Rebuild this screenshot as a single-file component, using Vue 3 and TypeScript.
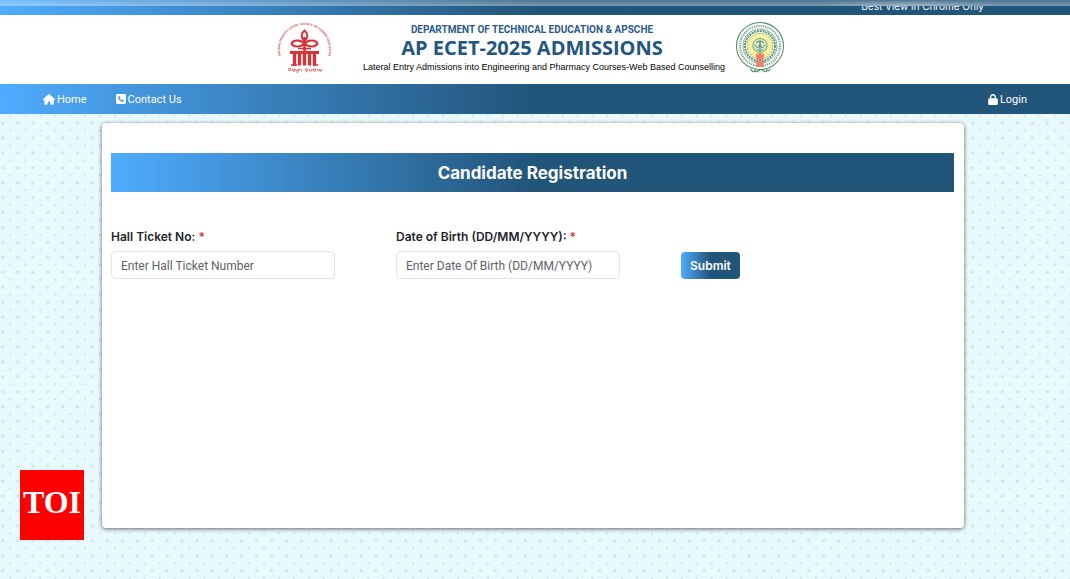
<script setup lang="ts">
import { ref } from 'vue'

const hallTicket = ref('')
const birthDate = ref('')

const archPillars: number[] = [16, 21, 26, 31, 36]
</script>

<template>
  <div class="page">
    <svg class="dots" aria-hidden="true">
      <defs>
        <pattern id="dot-grid" x="-4.5" y="115.6" width="14.92" height="14.92" patternUnits="userSpaceOnUse">
          <circle cx="7.46" cy="7.46" r="1.7" fill="#cbe9ec" />
          <circle cx="0" cy="0" r="1.2" fill="#cbe9ec" />
          <circle cx="14.92" cy="0" r="1.2" fill="#cbe9ec" />
          <circle cx="0" cy="14.92" r="1.2" fill="#cbe9ec" />
          <circle cx="14.92" cy="14.92" r="1.2" fill="#cbe9ec" />
        </pattern>
      </defs>
      <rect width="100%" height="100%" fill="url(#dot-grid)" />
    </svg>

    <div class="topbar">
      <span>Best View in Chrome Only</span>
      <div class="haze"></div>
    </div>

    <header class="masthead">
      <svg class="logo logo-left" viewBox="0 0 56 54" role="img" aria-label="Andhra Pradesh State Council of Higher Education">
        <defs>
          <path id="council-arc" d="M9.500 45 A24.500 24.500 0 1 1 45.500 45" />
        </defs>
        <text class="ring-text" fill="#d23f42"><textPath href="#council-arc" startOffset="50%" text-anchor="middle">ANDHRA PRADESH STATE COUNCIL OF HIGHER EDUCATION</textPath></text>
        <g fill="none" stroke="#dc3136" stroke-width="2">
          <path d="M27.500 9.500 C23.500 13 24 17 27.500 20 C31 17 31.500 13 27.500 9.500Z" />
          <path d="M27.500 22.500 C23 18 16 19 14.500 22.500 C16 26 23 27 27.500 22.500Z" />
          <path d="M27.500 22.500 C32 18 39 19 40.500 22.500 C39 26 32 27 27.500 22.500Z" />
          <path d="M27.500 16 V30" stroke-width="2.600" />
          <path d="M21 27.500 H34" stroke-width="1.500" />
        </g>
        <path d="M13 30 H42 V33 H13Z" fill="#dc3136" />
        <path v-for="x in archPillars" :key="x" :d="`M${x + 1.5} 32 V44.500`" stroke="#dc3136" stroke-width="3.300" />
        <path d="M14 44 H20 M36 44 H41" stroke="#dc3136" stroke-width="1.500" />
        <g fill="none" stroke="#d9585a" stroke-width="1">
          <path d="M11 48 q2 -2 3 0 q-1 3 -3 1 M15 50 q0 -3 2 -2 q2 2 -1 3 M18 48 q2 4 3 0 q1 3 -1 4 M22 49 q2 -2 3 1" />
          <path d="M28 50 q0 -3 2 -2 q2 2 -1 3 M32 48 q2 5 3 0 M36 50 q0 -3 2 -2 q2 2 -1 3 M40 48 q2 4 3 0 M43 50 q1 1 2 -2" />
        </g>
      </svg>

      <div class="titles">
        <p class="dept">DEPARTMENT OF TECHNICAL EDUCATION &amp; APSCHE</p>
        <h1>AP ECET-2025 ADMISSIONS</h1>
        <p class="tagline">Lateral Entry Admissions into Engineering and Pharmacy Courses-Web Based Counselling</p>
      </div>

      <svg class="logo logo-right" viewBox="0 0 50 54" role="img" aria-label="Government of Andhra Pradesh">
        <circle cx="25" cy="25" r="23.500" fill="#fff" stroke="#4f8e68" stroke-width="1.100" />
        <circle cx="25" cy="25" r="20" fill="none" stroke="#7dab8d" stroke-width="2.200" stroke-dasharray="1.300 1" />
        <circle cx="25" cy="25" r="17" fill="#fff" stroke="#5c9674" stroke-width=".8" />
        <circle cx="25" cy="25" r="15" fill="none" stroke="#5c9674" stroke-width="2" stroke-dasharray="2 .8" />
        <circle cx="25" cy="25" r="13" fill="#f8efa0" stroke="#86ab82" stroke-width=".6" />
        <circle cx="25" cy="24.500" r="7" fill="#dfebd1" stroke="#5c9674" stroke-width=".9" />
        <g fill="none" stroke="#3f815a" stroke-width="1">
          <path d="M21 22 Q25 18 29 22 M20 24 Q23 29 25 24 Q27 29 30 24 M22 28 Q25 32 28 28 M25 20 V29" />
        </g>
        <path d="M21 36 Q20 32 23 33 Q25 31 27 33 Q30 32 29 36 L28 39 H22Z M20 40 H30 V42 H28.500 L29 46 H21 L21.500 42 H20Z" fill="#ed806d" />
        <g fill="none" stroke="#4f8e68" stroke-width="1.100">
          <path d="M15 49 q2 -1 2 1 q2 2 3 -1 q1 3 3 1 q1 -2 2 0 M27 50 q1 -2 2 0 q2 2 3 -1 q2 2 3 -1" />
        </g>
      </svg>
    </header>

    <nav class="navbar" aria-label="Main">
      <a href="#home">
        <svg class="icon-home" viewBox="0 0 576 512" aria-hidden="true"><path fill="currentColor" d="M575.8 255.5c0 18-15 32.1-32 32.1h-32l.7 160.2c0 2.700-.2 5.400-.5 8.100V472c0 22.100-17.900 40-40 40H456c-1.100 0-2.200 0-3.300-.1c-1.400 .1-2.800 .1-4.200 .1H416 392c-22.100 0-40-17.900-40-40V448 384c0-17.700-14.300-32-32-32H256c-17.700 0-32 14.300-32 32v64 24c0 22.100-17.900 40-40 40H160 128.100c-1.500 0-3-.1-4.500-.2c-1.200 .1-2.400 .2-3.600 .2H104c-22.100 0-40-17.900-40-40V360c0-.9 0-1.900 .1-2.800V287.600H32c-18 0-32-14-32-32.100c0-9 3-17 10-24L266.400 8c7-7 15-8 22-8s15 2 21 7L564.800 231.500c8 7 12 15 11 24z" /></svg>
        <span>Home</span>
      </a>
      <a href="#contact">
        <svg class="icon-phone" viewBox="0 32 448 448" aria-hidden="true"><path fill="currentColor" d="M64 32C28.700 32 0 60.700 0 96V416c0 35.300 28.700 64 64 64H384c35.300 0 64-28.700 64-64V96c0-35.300-28.700-64-64-64H64zm90.700 96.700c9.700-2.600 19.900 2.300 23.700 11.600l20 48c3.400 8.200 1 17.600-5.800 23.200L168 231.700c16.600 35.200 45.100 63.700 80.300 80.300l20.200-24.700c5.600-6.800 15-9.200 23.200-5.800l48 20c9.300 3.900 14.200 14 11.600 23.700l-12 44C336.900 378 329 384 320 384C196.700 384 96 283.300 96 160c0-9 6-16.900 14.700-19.300l44-12z" /></svg>
        <span>Contact Us</span>
      </a>
      <a class="login" href="#login">
        <svg class="icon-lock" viewBox="0 0 448 512" aria-hidden="true"><path fill="currentColor" d="M144 144v48H304V144c0-44.200-35.800-80-80-80s-80 35.800-80 80zM80 192V144C80 64.500 144.500 0 224 0s144 64.500 144 144v48h16c35.300 0 64 28.700 64 64V448c0 35.300-28.700 64-64 64H64c-35.300 0-64-28.700-64-64V256c0-35.300 28.700-64 64-64H80z" /></svg>
        <span>Login</span>
      </a>
    </nav>

    <main>
      <section class="card">
        <h2>Candidate Registration</h2>
        <form @submit.prevent>
          <div class="field">
            <label for="hall-ticket">Hall Ticket No: <span class="required">*</span></label>
            <input id="hall-ticket" v-model="hallTicket" type="text" placeholder="Enter Hall Ticket Number" />
          </div>
          <div class="field">
            <label for="birth-date">Date of Birth (DD/MM/YYYY): <span class="required">*</span></label>
            <input id="birth-date" v-model="birthDate" type="text" placeholder="Enter Date Of Birth (DD/MM/YYYY)" />
          </div>
          <button type="submit">Submit</button>
        </form>
      </section>
    </main>

    <div class="badge">TOI</div>
  </div>
</template>

<style>
body {
  background: #e9faff;
}
</style>

<style scoped>
.page {
  --bar: linear-gradient(to right, #4facfe, #22557a 50%);
  position: relative;
  min-height: 100vh;
  font-family: Inter, "Liberation Sans", sans-serif;
  color: #212529;
}

.page *,
.page {
  box-sizing: border-box;
}

.dots {
  position: absolute;
  inset: 0;
  width: 100%;
  height: 100%;
}

.topbar {
  position: relative;
  display: flex;
  justify-content: flex-end;
  align-items: flex-start;
  height: 15px;
  padding-right: 86px;
  background: var(--bar);
  color: #fff;
  font-size: 10px;
  line-height: 12px;
}

.haze {
  position: absolute;
  inset: 0 0 auto;
  height: 6px;
  background:
    radial-gradient(closest-side, rgba(255, 255, 255, 0.3), transparent) 92% 0 / 180px 12px no-repeat,
    linear-gradient(rgba(255, 255, 255, 0.2), rgba(255, 255, 255, 0.4)),
    var(--bar);
}

.masthead {
  position: relative;
  display: flex;
  justify-content: center;
  height: 69px;
  padding: 6px 8px 0 0;
  background: #fff;
}

.logo {
  flex: none;
  height: 54px;
  overflow: visible;
}

.logo-left {
  width: 56px;
}

.logo-right {
  width: 50px;
}

.ring-text {
  font: 700 3px "Liberation Sans", sans-serif;
}

.titles {
  margin: 0 10px 0 30px;
  text-align: center;
  white-space: nowrap;
}

.titles p,
.titles h1 {
  margin: 0;
}

.titles .dept,
.titles h1 {
  padding-right: 24px;
}

.dept {
  padding-top: 2px;
  color: #2a5a8c;
  font: 700 10px/14px Roboto, sans-serif;
}

h1 {
  color: #22557f;
  font: 700 20px/22px "Open Sans", sans-serif;
}

.tagline {
  color: #000;
  font: 400 9px/16px "Liberation Sans", sans-serif;
}

.navbar {
  position: relative;
  display: flex;
  align-items: center;
  gap: 29px;
  height: 30px;
  padding: 0 43px;
  background: var(--bar);
  font: 400 11px/16px Roboto, sans-serif;
}

.navbar a {
  display: flex;
  align-items: center;
  gap: 2px;
  color: #fff;
  text-decoration: none;
}

.navbar span {
  padding-top: 2px;
}

.navbar .login {
  margin-left: auto;
}

.icon-home {
  width: 12px;
  height: 11px;
}

.icon-phone {
  width: 10px;
  height: 10px;
}

.icon-lock {
  width: 10px;
  height: 11px;
}

main {
  position: relative;
  padding: 9px 106px 51px 102px;
}

.card {
  min-height: 405px;
  padding: 30px 10px 30px 9px;
  border-radius: 4px;
  background: #fff;
  box-shadow: 0 1px 4px rgba(0, 0, 0, 0.6);
}

h2 {
  margin: 0;
  padding-top: 1px;
  background: var(--bar);
  color: #fff;
  font-size: 17px;
  font-weight: 700;
  line-height: 38px;
  text-align: center;
}

form {
  display: grid;
  grid-template-columns: 224fr 224fr 273fr;
  column-gap: 61px;
  align-items: end;
  padding-top: 36px;
}

.field {
  display: grid;
  gap: 5px;
}

label {
  font-size: 12px;
  font-weight: 600;
  line-height: 18px;
}

.required {
  color: #dc3545;
}

input {
  width: 100%;
  height: 28px;
  padding: 2px 9px 0;
  border: 1px solid #dee2e6;
  border-radius: 5px;
  background: #fff;
  color: inherit;
  font: 400 12px/18px Roboto, sans-serif;
}

input::placeholder {
  color: #5c6268;
}

button {
  justify-self: start;
  height: 27px;
  padding: 0 9px;
  border: 0;
  border-radius: 4px;
  background: var(--bar);
  color: #fff;
  font: inherit;
  font-size: 12px;
  font-weight: 600;
}

.badge {
  position: fixed;
  bottom: 39px;
  left: 20px;
  width: 64px;
  height: 70px;
  background: #f00;
  color: #fff;
  font: 700 32px/64px "Liberation Serif", serif;
  text-align: center;
}
</style>
